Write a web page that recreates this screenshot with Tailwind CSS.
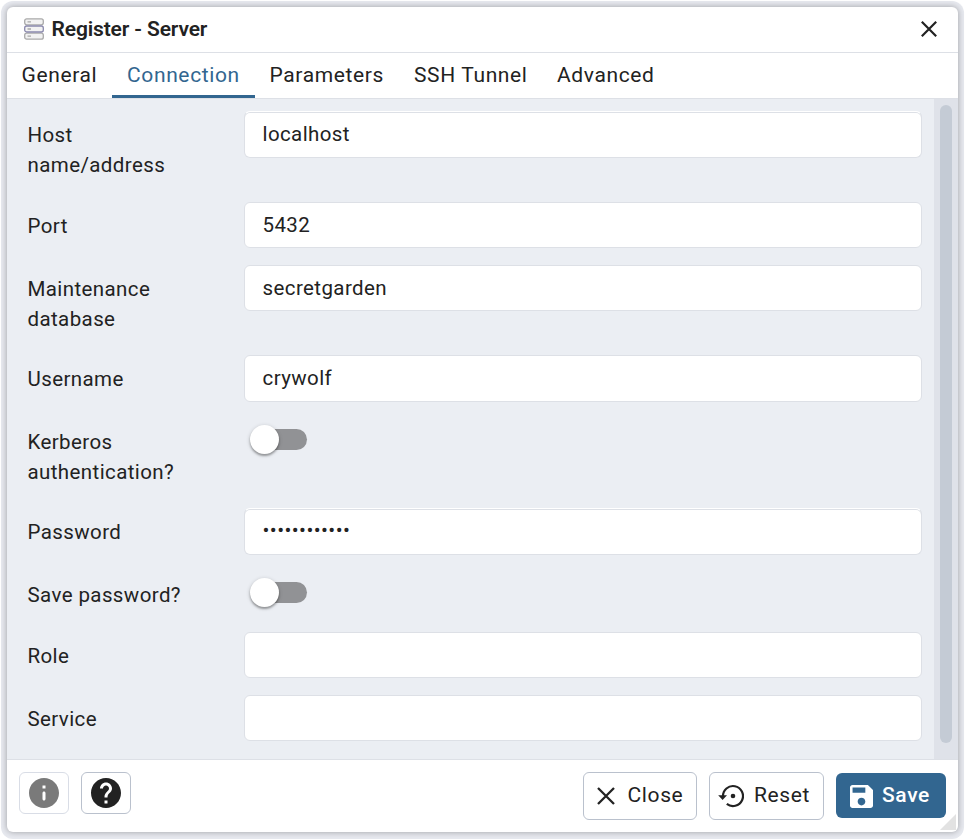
<!DOCTYPE html>
<html lang="en">
<head>
<meta charset="utf-8">
<title>Register - Server</title>
<script src="https://cdn.jsdelivr.net/npm/@tailwindcss/browser@4"></script>
</head>
<body class="w-[965px] h-[839px] overflow-hidden bg-white font-[Roboto,sans-serif] text-[21px] leading-[30px] tracking-[0.63px] text-[#222]">
<div class="h-full pt-px pl-px pr-px">
<div class="h-full rounded-xl bg-[#e7e9ef] p-1.5 pr-[5px] pt-[6px]">
<main class="relative flex h-[825px] w-[951px] flex-col overflow-hidden rounded-[6px] bg-white shadow-[0_0_6px_rgba(0,0,0,0.32)]">
  <header class="flex h-[46px] shrink-0 items-center border-b border-[#dde0e6] pl-[17px] pr-[21px]">
    <svg class="-mt-0.5 h-[22px] w-5" viewBox="0 0 20 22" fill="#f2f2f2" stroke="#a9a9a9" stroke-width="1.3">
      <rect x=".7" y=".8" width="18.6" height="6" rx="2"/>
      <rect x=".7" y="15.2" width="18.6" height="6" rx="2"/>
      <rect x=".7" y="8" width="18.6" height="6" rx="2" stroke="#8b89ad"/>
      <path d="M3.5 3.8H7M3.5 11H7M3.5 18.2H7"/>
    </svg>
    <h1 class="ml-[7.5px] flex-1 pb-px text-[21px] font-semibold tracking-[-0.13px]">Register - Server</h1>
    <svg class="-mt-px h-4 w-4" viewBox="0 0 16 16" fill="none" stroke="#222" stroke-width="2.2"><path d="M.8.8 15.2 15.2M15.2.8.8 15.2"/></svg>
  </header>
  <nav class="flex h-[46px] shrink-0 border-b border-[#dde0e6] leading-[45px]">
    <span class="w-[105px] pl-[14.5px]">General</span>
    <span class="w-[143px] border-b-3 border-[#326690] pl-[15px] text-[#326690]">Connection</span>
    <span class="w-[144px] pl-[14.5px]">Parameters</span>
    <span class="w-[143px] pl-[15px]">SSH Tunnel</span>
    <span class="pl-[15px]">Advanced</span>
  </nav>
  <section class="flex h-[660px] shrink-0 bg-[#ebeef3] text-[20.5px] tracking-[0.4px]">
    <div class="flex-1 pt-3 pl-[20.5px] pr-3">
      <div class="flex h-[91px]"><label class="w-[216.5px] pt-[9px] pr-10">Host name/address</label><div class="flex h-[47px] flex-1 items-center rounded-[6px] border border-[#dde0e6] border-t-white bg-white pb-px pl-[17.5px] shadow-[inset_0_1px_0_#dde0e6]">localhost</div></div>
      <div class="flex h-[63px]"><label class="w-[216.5px] pt-[9px] pr-10">Port</label><div class="flex h-[46px] flex-1 items-center rounded-[6px] border border-[#dde0e6] bg-white pl-[17.5px]">5432</div></div>
      <div class="flex h-[90px]"><label class="w-[216.5px] pt-[9px] pr-10">Maintenance database</label><div class="flex h-[46px] flex-1 items-center rounded-[6px] border border-[#dde0e6] bg-white pl-[17.5px]">secretgarden</div></div>
      <div class="flex h-[63px]"><label class="w-[216.5px] pt-[9px] pr-10">Username</label><div class="flex h-[47px] flex-1 items-center rounded-[6px] border border-[#dde0e6] bg-white pb-px pl-[17.5px]">crywolf</div></div>
      <div class="flex h-[90px]"><label class="w-[216.5px] pt-[9px] pr-10">Kerberos authentication?</label>
        <div class="mt-1.5 ml-[6px] flex h-[30px] w-14 items-center"><div class="z-10 h-[29px] w-[29px] shrink-0 rounded-full bg-white shadow-[0_2px_2px_rgba(0,0,0,0.28),0_1px_4px_rgba(0,0,0,0.2)]"></div><div class="-ml-[19px] h-[21px] w-[47px] shrink-0 rounded-full bg-[#919295]"></div></div></div>
      <div class="flex h-[63px]"><label class="w-[216.5px] pt-[9px] pr-10">Password</label><div class="flex h-[47px] flex-1 items-center rounded-[6px] border border-[#dde0e6] border-t-white bg-white pb-[3px] pl-[17.5px] shadow-[inset_0_1px_0_#dde0e6]">••••••••••••</div></div>
      <div class="flex h-[61px]"><label class="w-[216.5px] pt-[9px]">Save password?</label>
        <div class="mt-1.5 ml-[6px] flex h-[30px] w-14 items-center"><div class="z-10 h-[29px] w-[29px] shrink-0 rounded-full bg-white shadow-[0_2px_2px_rgba(0,0,0,0.28),0_1px_4px_rgba(0,0,0,0.2)]"></div><div class="-ml-[19px] h-[21px] w-[47px] shrink-0 rounded-full bg-[#919295]"></div></div></div>
      <div class="flex h-[63px]"><label class="w-[216.5px] pt-[9px]">Role</label><div class="h-[46px] flex-1 rounded-[6px] border border-[#dde0e6] bg-white"></div></div>
      <div class="flex h-[63px]"><label class="w-[216.5px] pt-[9px]">Service</label><div class="h-[46px] flex-1 rounded-[6px] border border-[#dde0e6] bg-white"></div></div>
    </div>
    <div class="w-6 bg-[#dfe2e9] px-1.5 pt-1.5"><div class="h-[638px] rounded-full bg-[#c4cbd5]"></div></div>
  </section>
  <footer class="flex flex-1 items-start border-t border-[#dde0e6] px-3 pt-3">
    <div class="flex h-[42px] w-[50px] items-center justify-center rounded-[6px] border border-[#d9dde6]"><svg class="h-[30px] w-[30px]" viewBox="2 2 20 20" fill="#7a7a7a"><path d="M12 2C6.48 2 2 6.48 2 12s4.48 10 10 10 10-4.48 10-10S17.52 2 12 2zm0 15c-.55 0-1-.45-1-1v-4c0-.55.45-1 1-1s1 .45 1 1v4c0 .55-.45 1-1 1zm1-8h-2V7h2v2z"/></svg></div>
    <div class="ml-3 flex h-[42px] w-[50px] items-center justify-center rounded-[6px] border border-[#bac1cd]"><svg class="h-[30px] w-[30px]" viewBox="2 2 20 20" fill="#222"><path d="M12 2C6.48 2 2 6.48 2 12s4.48 10 10 10 10-4.48 10-10S17.52 2 12 2zm1 17h-2v-2h2v2zm2.07-7.75-.9.92C13.45 12.9 13 13.5 13 15h-2v-.5c0-1.1.45-2.1 1.17-2.83l1.24-1.26c.37-.36.59-.86.59-1.41 0-1.1-.9-2-2-2s-2 .9-2 2H8c0-2.21 1.79-4 4-4s4 1.79 4 4c0 .88-.36 1.68-.93 2.25z"/></svg></div>
    <div class="ml-auto flex h-12 w-[114px] items-center rounded-[6px] border border-[#bac1cd] pl-[13px] pb-[3px]"><svg class="mt-[3px] h-[18px] w-[18px]" viewBox="0 0 18 18" fill="none" stroke="#222" stroke-width="2.3"><path d="M1 1 17 17M17 1 1 17"/></svg><span class="ml-[12.5px]">Close</span></div>
    <div class="ml-3 flex h-12 w-[115px] items-center rounded-[6px] border border-[#bac1cd] pl-[8px] pb-[3px]"><svg class="mt-[3px] h-[26px] w-[26px]" viewBox="0 0 26 26" fill="none" stroke="#222" stroke-width="2.2"><path d="M5 13.5A10 10 0 1 1 8.8 20.9" /><path d="M.2 12.2H9L4.6 17z" fill="#222" stroke="none"/><circle cx="15" cy="13" r="2.3" fill="#222" stroke="none"/></svg><span class="ml-[10px]">Reset</span></div>
    <div class="ml-3 mt-px flex h-[45px] w-[110px] items-center rounded-[6px] bg-[#326690] pl-[13.5px] font-medium text-white"><svg class="mt-px h-[23px] w-[23px]" viewBox="3 3 18 18" fill="white"><path d="M17 3H5c-1.11 0-2 .9-2 2v14c0 1.1.89 2 2 2h14c1.1 0 2-.9 2-2V7l-4-4zm-5 16c-1.66 0-3-1.34-3-3s1.34-3 3-3 3 1.34 3 3-1.34 3-3 3zm3-10H5V5h10v4z"/></svg><span class="ml-[9.5px] pb-px">Save</span></div>
  </footer>
  <svg class="absolute right-0.5 bottom-0.5 h-4 w-4" viewBox="0 0 16 16" fill="#e2e2e2"><path d="M16 0v16H0z"/></svg>
</main>
</div>
</div>
</body>
</html>
